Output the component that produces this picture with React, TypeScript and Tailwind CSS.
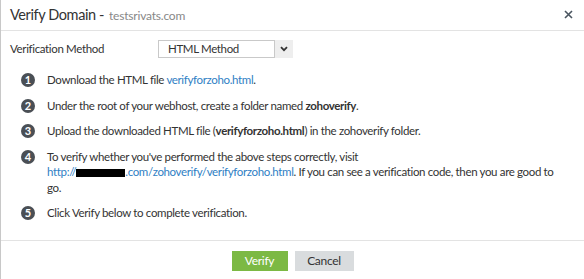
export default function App() {
  const link = "text-[#2f80c4]";
  const steps: React.ReactNode[] = [
    <>
      Download the HTML file <span className={link}>verifyforzoho.html</span>.
    </>,
    <>
      Under the root of your webhost, create a folder named <b className="font-bold">zohoverify</b>.
    </>,
    <>
      Upload the downloaded HTML file (<b className="font-bold">verifyforzoho.html</b>) in the zohoverify folder.
    </>,
    <>
      To verify whether you've performed the above steps correctly, visit
      <br />
      <span className={link}>http://</span>
      <span className="inline-block h-[8px] w-[49px] bg-black align-[-1px]" />
      <span className={link}>.com/zohoverify/verifyforzoho.html</span>. If you can see a verification code, then
      you are good to go.
    </>,
    <>Click Verify below to complete verification.</>,
  ];

  return (
    <div
      className="flex h-[279px] w-[584px] flex-col border-l border-[#c8c8c8] bg-white text-[#333]"
      style={{ fontFamily: "Lato, 'Open Sans', sans-serif" }}
    >
      <div className="flex h-[31px] shrink-0 items-center justify-between border-b border-[#e3e3e3] pl-[9px] pr-[11px]">
        <div className="flex items-baseline">
          <span className="text-[14.5px] tracking-[-0.4px] text-[#333]">Verify Domain -</span>
          <span className="ml-[5px] text-[12px] tracking-[-0.2px] text-[#888]">testsrivats.com</span>
        </div>
        <svg width="9" height="9" viewBox="0 0 9 9" className="mb-[2px]">
          <path d="M1 1L8 8M8 1L1 8" stroke="#4a5560" strokeWidth="1.6" />
        </svg>
      </div>

      <div className="flex-1 px-[9px] text-[11.5px] tracking-[-0.35px]">
        <div className="mt-[9px] flex h-[18px] items-center">
          <span className="w-[148px]">Verification Method</span>
          <div className="flex h-[18px] w-[117px] items-center border border-[#c9c9c9] bg-white pl-[9px]">
            HTML Method
          </div>
          <div className="flex h-[18px] w-[18px] items-center justify-center bg-[#eeeeee]">
            <svg width="8" height="6" viewBox="0 0 8 6">
              <path d="M1 1.2L4 4.2L7 1.2" stroke="#333" strokeWidth="1.8" fill="none" />
            </svg>
          </div>
        </div>

        <ol className="mt-[14px] flex flex-col gap-[10px] pl-[11px] pr-[12px]">
          {steps.map((s, i) => (
            <li key={i} className="flex leading-[15.5px]">
              <span className="mr-[12px] mt-[1px] flex h-[14px] w-[14px] shrink-0 items-center justify-center rounded-full bg-[#4a4f55] text-[11px] font-bold tracking-normal text-white">
                {i + 1}
              </span>
              <span>{s}</span>
            </li>
          ))}
        </ol>
      </div>

      <div className="flex h-[39px] shrink-0 items-start justify-center gap-[7px] border-t border-[#e3e3e3] pt-[10px] text-[12px] tracking-[-0.3px]">
        <button className="h-[20px] w-[56px] bg-[#7cb944] text-white">Verify</button>
        <button className="h-[20px] w-[59px] bg-[#d9dcde] text-[#333]">Cancel</button>
      </div>
    </div>
  );
}
